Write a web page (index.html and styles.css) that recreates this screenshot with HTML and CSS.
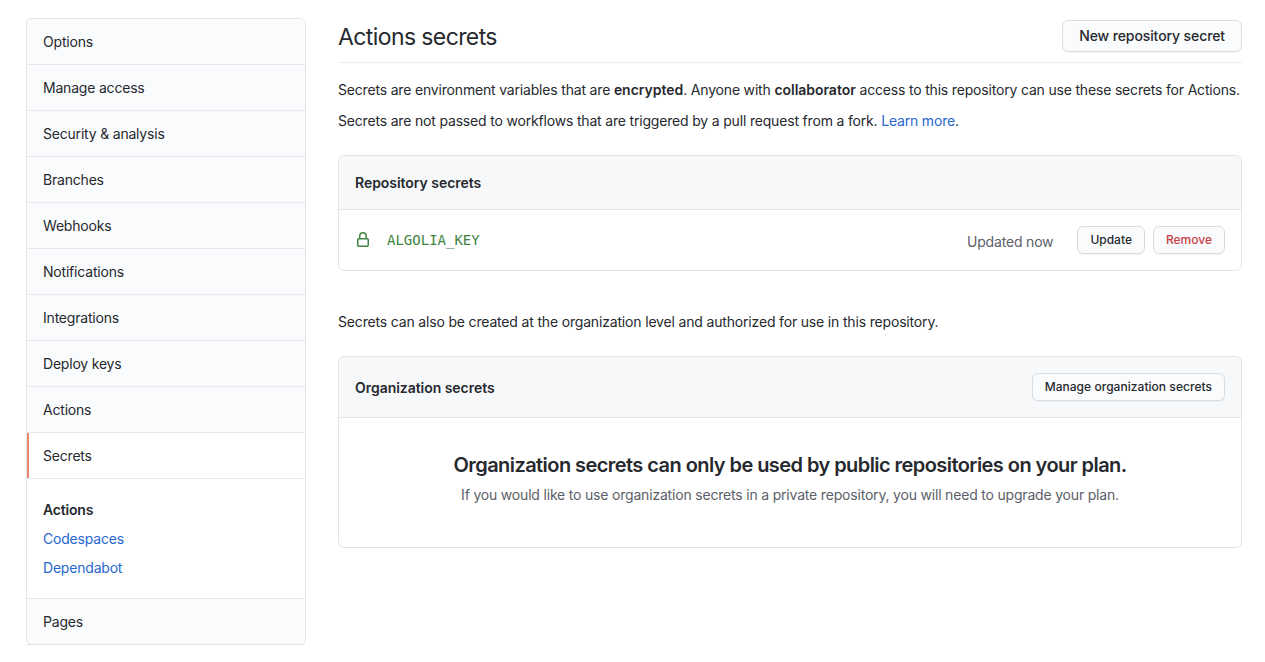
FILE: index.html
```html
<!DOCTYPE html>
<html lang="en">
<head>
<meta charset="utf-8">
<title>Actions secrets</title>
<link rel="stylesheet" href="styles.css">
</head>
<body>
<div class="layout">
  <nav class="menu">
    <a class="item">Options</a>
    <a class="item">Manage access</a>
    <a class="item">Security &amp; analysis</a>
    <a class="item">Branches</a>
    <a class="item">Webhooks</a>
    <a class="item">Notifications</a>
    <a class="item">Integrations</a>
    <a class="item">Deploy keys</a>
    <a class="item">Actions</a>
    <a class="item selected">Secrets</a>
    <div class="submenu">
      <a class="sub current">Actions</a>
      <a class="sub">Codespaces</a>
      <a class="sub">Dependabot</a>
    </div>
    <a class="item">Pages</a>
  </nav>
  <main class="content">
    <header class="head">
      <h1>Actions secrets</h1>
      <button class="btn">New repository secret</button>
    </header>
    <p class="intro">Secrets are environment variables that are <b>encrypted</b>. Anyone with <b>collaborator</b> access to this repository can use these secrets for Actions.</p>
    <p class="intro second">Secrets are not passed to workflows that are triggered by a pull request from a fork. <a class="link">Learn more</a>.</p>
    <section class="box repo">
      <div class="box-head"><h2>Repository secrets</h2></div>
      <div class="row">
        <svg class="lock" width="16" height="16" viewBox="0 0 16 16"><path fill="currentColor" fill-rule="evenodd" d="M4 4v2h-.25A1.75 1.75 0 002 7.75v5.5c0 .966.784 1.75 1.75 1.75h8.5A1.75 1.75 0 0014 13.25v-5.5A1.75 1.75 0 0012.25 6H12V4a4 4 0 10-8 0zm6.5 2V4a2.5 2.5 0 10-5 0v2h5zM12 7.5h.25a.25.25 0 01.25.25v5.5a.25.25 0 01-.25.25h-8.5a.25.25 0 01-.25-.25v-5.5a.25.25 0 01.25-.25H12z"/></svg>
        <code class="name">ALGOLIA_KEY</code>
        <span class="updated">Updated now</span>
        <button class="btn small">Update</button>
        <button class="btn small danger">Remove</button>
      </div>
    </section>
    <p class="intro org-intro">Secrets can also be created at the organization level and authorized for use in this repository.</p>
    <section class="box">
      <div class="box-head tall"><h2>Organization secrets</h2><button class="btn small manage">Manage organization secrets</button></div>
      <div class="blank">
        <h3>Organization secrets can only be used by public repositories on your plan.</h3>
        <p>If you would like to use organization secrets in a private repository, you will need to upgrade your plan.</p>
      </div>
    </section>
  </main>
</div>
</body>
</html>
```
FILE: styles.css
```css
* { box-sizing: border-box; }
body { margin: 0; background: #fff; color: #26292e; font: 14px/21px Inter, "Liberation Sans", sans-serif; letter-spacing: -0.18px; overflow: hidden; }
h1, h2, h3, p { margin: 0; }
h2 { font-size: 14px; font-weight: 600; line-height: 21px; letter-spacing: -0.04px; }
b { font-weight: 600; letter-spacing: -0.03px; }
.layout { display: flex; gap: 32px; padding: 18px 23px 0 26px; }
.menu { position: relative; width: 280px; height: 627px; flex: none; border: 1px solid #e2e4e8; border-radius: 6px; letter-spacing: -0.2px; }
.menu::after { content: ""; position: absolute; left: 0; right: 0; bottom: -1px; height: 1px; background: #e2e4e8; }
.item { display: block; height: 46px; padding: 12px 16px; border-bottom: 1px solid #e7e9ec; background: #fafbfc; }
.item:first-child { border-radius: 5px 5px 0 0; }
.item:last-child { border-bottom: 0; height: 45px; border-radius: 0 0 5px 5px; }
.item.selected { background: #fff; box-shadow: inset 2px 0 0 #ec8870; }
.submenu { height: 120px; padding: 16px 16px 0; border-bottom: 1px solid #e7e9ec; }
.sub { display: block; height: 29px; padding-top: 4px; color: #2768cf; }
.sub.current { color: #26292e; font-weight: 600; }
.content { flex: 1; min-width: 0; white-space: nowrap; }
.head { display: flex; justify-content: space-between; height: 45px; padding-top: 2px; border-bottom: 1px solid #eaecef; }
h1 { font-size: 23px; font-weight: 400; line-height: 34px; letter-spacing: -0.6px; }
.btn { height: 32px; padding: 0 16px; border: 1px solid #d9dcdf; border-radius: 6px; background: #fafbfc; box-shadow: 0 1px 0 rgba(27,31,35,.04); color: #26292e; font: 500 14px/20px Inter, "Liberation Sans", sans-serif; letter-spacing: -0.1px; white-space: nowrap; }
.small { height: 28px; padding: 0 12px; font-size: 12px; letter-spacing: 0; }
.manage { letter-spacing: 0.04px; }
.danger { color: #c74046; }
.intro { margin-top: 16px; }
.second { margin-top: 10px; }
.link { color: #2768cf; }
.box { border: 1px solid #e2e4e8; border-radius: 6px; overflow: hidden; }
.repo { margin-top: 24px; }
.box-head { display: flex; align-items: center; justify-content: space-between; height: 54px; padding: 0 16px; background: #f6f8fa; border-bottom: 1px solid #e2e4e8; }
.row { display: flex; align-items: center; height: 60px; padding: 0 16px; }
.lock { color: #408442; flex: none; }
.name { margin-left: 16px; color: #408442; font: 14px/21px "DejaVu Sans Mono", monospace; letter-spacing: 0; }
.updated { margin-left: auto; margin-right: 24px; padding-top: 2px; color: #5b6068; }
.row .danger { margin-left: 8px; }
.org-intro { margin: 40px 0 24px; letter-spacing: -0.17px; }
.tall { height: 61px; }
.blank { height: 129px; padding-top: 32px; text-align: center; color: #5b6068; letter-spacing: -0.19px; }
h3 { font-size: 20px; font-weight: 600; line-height: 30px; color: #26292e; letter-spacing: -0.56px; }
.blank p { margin-top: 4px; }
```
